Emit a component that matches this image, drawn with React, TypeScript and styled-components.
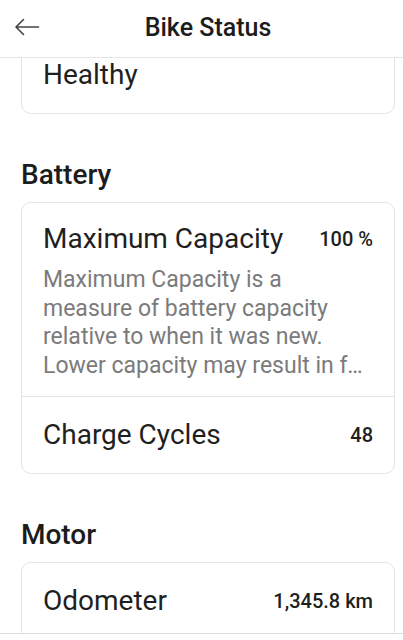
import React from 'react';
import styled, { createGlobalStyle } from 'styled-components';

const GlobalStyle = createGlobalStyle`
  html, body {
    margin: 0;
    padding: 0;
    background: #ffffff;
    overflow: hidden;
  }
  body {
    font-family: Roboto, "Noto Sans", Arial, sans-serif;
    color: #1f1f1f;
  }
`;

const Screen = styled.div`
  width: 416px;
  height: 640px;
  display: flex;
  flex-direction: column;
  background: #fff;
`;

const Header = styled.header`
  height: 57px;
  flex-shrink: 0;
  display: grid;
  grid-template-columns: 60px 1fr 60px;
  align-items: center;
  border-bottom: 1px solid #e6e6e6;
`;

const BackButton = styled.button`
  border: none;
  background: none;
  padding: 0 0 4px 14px;
  display: flex;
  align-items: center;
  color: #444;
  cursor: pointer;
`;

const Title = styled.h1`
  margin: 0 0 2px;
  text-align: center;
  font-size: 25px;
  font-weight: 500;
  color: #1c1c1c;
`;

const Content = styled.main`
  flex: 1;
  overflow: hidden;
  padding: 0 21px;
`;

const Card = styled.section<{ $offset?: number }>`
  margin-top: ${(p) => p.$offset ?? 0}px;
  border: 1px solid #e4e4e4;
  border-radius: 10px;
  background: #fff;
  overflow: hidden;
`;

const SectionTitle = styled.h2`
  margin: 45px 0 11px;
  font-size: 28px;
  line-height: 32px;
  font-weight: 500;
  color: #1c1c1c;
`;

const Row = styled.div`
  height: 76px;
  padding: 0 21px;
  display: flex;
  align-items: center;
  justify-content: space-between;
  & + & {
    border-top: 1px solid #e4e4e4;
  }
`;

const DetailRow = styled.div`
  padding: 21px 21px 16px;
  & + ${Row} {
    border-top: 1px solid #e4e4e4;
  }
`;

const Label = styled.span`
  font-size: 28px;
  line-height: 30px;
  color: #1f1f1f;
`;

const Value = styled.span`
  font-size: 20px;
  font-weight: 500;
  color: #1f1f1f;
`;

const DetailHead = styled.div`
  display: flex;
  align-items: center;
  justify-content: space-between;
`;

const Description = styled.p`
  margin: 12px 0 0;
  font-size: 23px;
  line-height: 28.5px;
  color: #7b7b7b;
`;

const DescLine = styled.span`
  display: block;
  white-space: nowrap;
  overflow: hidden;
  text-overflow: ellipsis;
`;

const BottomBar = styled.footer`
  height: 6px;
  flex-shrink: 0;
  border-top: 1px solid #dcdcdc;
  background: #fff;
`;

const capacityText = [
  'Maximum Capacity is a',
  'measure of battery capacity',
  'relative to when it was new.',
  'Lower capacity may result in fewer hours of riding between charges.',
];

function BackArrow() {
  return (
    <svg width="26" height="18" viewBox="0 0 26 18" fill="none">
      <path
        d="M24.5 9H2M9.5 1.5L2 9l7.5 7.5"
        stroke="currentColor"
        strokeWidth="1.6"
        strokeLinecap="round"
        strokeLinejoin="round"
      />
    </svg>
  );
}

export default function App() {
  return (
    <>
      <GlobalStyle />
      <Screen>
        <Header>
          <BackButton aria-label="Back">
            <BackArrow />
          </BackButton>
          <Title>Bike Status</Title>
          <span />
        </Header>
        <Content>
          <Card $offset={-22}>
            <Row>
              <Label>Healthy</Label>
            </Row>
          </Card>

          <SectionTitle>Battery</SectionTitle>
          <Card>
            <DetailRow>
              <DetailHead>
                <Label>Maximum Capacity</Label>
                <Value>100 %</Value>
              </DetailHead>
              <Description>
                {capacityText.map((line) => (
                  <DescLine key={line}>{line}</DescLine>
                ))}
              </Description>
            </DetailRow>
            <Row>
              <Label>Charge Cycles</Label>
              <Value>48</Value>
            </Row>
          </Card>

          <SectionTitle>Motor</SectionTitle>
          <Card>
            <Row>
              <Label>Odometer</Label>
              <Value>1,345.8 km</Value>
            </Row>
          </Card>
        </Content>
        <BottomBar />
      </Screen>
    </>
  );
}
